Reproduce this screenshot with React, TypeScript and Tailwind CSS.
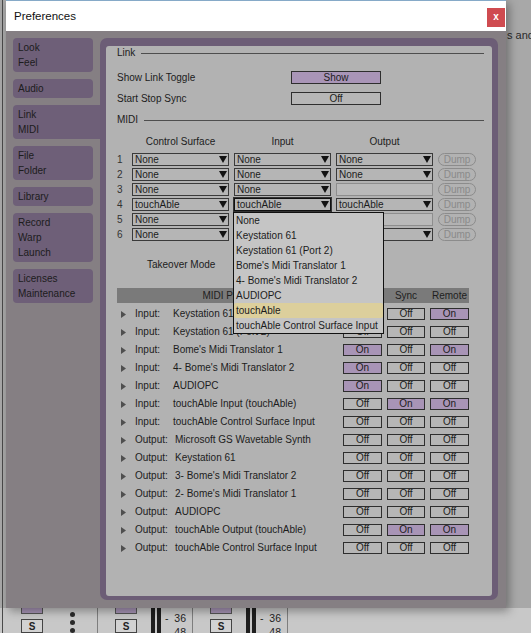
import React from "react";

type Port = {
  dir: "Input" | "Output";
  name: string;
  track: boolean;
  sync: boolean;
  remote: boolean;
};

const ports: Port[] = [
  { dir: "Input", name: "Keystation 61", track: true, sync: false, remote: true },
  { dir: "Input", name: "Keystation 61 (Port 2)", track: false, sync: false, remote: false },
  { dir: "Input", name: "Bome's Midi Translator 1", track: true, sync: false, remote: true },
  { dir: "Input", name: "4- Bome's Midi Translator 2", track: true, sync: false, remote: false },
  { dir: "Input", name: "AUDIOPC", track: true, sync: false, remote: false },
  { dir: "Input", name: "touchAble Input (touchAble)", track: false, sync: true, remote: true },
  { dir: "Input", name: "touchAble Control Surface Input", track: false, sync: false, remote: false },
  { dir: "Output", name: "Microsoft GS Wavetable Synth", track: false, sync: false, remote: false },
  { dir: "Output", name: "Keystation 61", track: false, sync: false, remote: false },
  { dir: "Output", name: "3- Bome's Midi Translator 2", track: false, sync: false, remote: false },
  { dir: "Output", name: "2- Bome's Midi Translator 1", track: false, sync: false, remote: false },
  { dir: "Output", name: "AUDIOPC", track: false, sync: false, remote: false },
  { dir: "Output", name: "touchAble Output (touchAble)", track: false, sync: true, remote: true },
  { dir: "Output", name: "touchAble Control Surface Input", track: false, sync: false, remote: false },
];

const surfaces: { cs: string; input: string; output: string | null }[] = [
  { cs: "None", input: "None", output: "None" },
  { cs: "None", input: "None", output: "None" },
  { cs: "None", input: "None", output: null },
  { cs: "touchAble", input: "touchAble", output: "touchAble" },
  { cs: "None", input: "None", output: null },
  { cs: "None", input: "None", output: "None" },
];

const menuItems = [
  "None",
  "Keystation 61",
  "Keystation 61 (Port 2)",
  "Bome's Midi Translator 1",
  "4- Bome's Midi Translator 2",
  "AUDIOPC",
  "touchAble",
  "touchAble Control Surface Input",
];

const tabs = [
  ["Look", "Feel"],
  ["Audio"],
  ["Link", "MIDI"],
  ["File", "Folder"],
  ["Library"],
  ["Record", "Warp", "Launch"],
  ["Licenses", "Maintenance"],
];

const Arrow = () => (
  <svg width="8" height="7" viewBox="0 0 8 7" className="shrink-0">
    <path d="M0 0H8L4 7Z" fill="#121212" />
  </svg>
);

function Select({
  value,
  focused,
  children,
}: {
  value: string | null;
  focused?: boolean;
  children?: React.ReactNode;
}) {
  if (value === null) {
    return <div className="h-[13px] w-[97px] border border-[#8e8e8e] bg-[#bababa]" />;
  }
  return (
    <div
      className={`relative flex h-[13px] w-[97px] items-center justify-between bg-[#b5b5b5] pl-[2px] pr-[1px] ${
        focused ? "border border-[#111] outline outline-1 outline-[#333]" : "border border-[#3a3a3a]"
      }`}
    >
      <span className="leading-none">{value}</span>
      <Arrow />
      {children}
    </div>
  );
}

function SectionHeader({ label }: { label: string }) {
  return (
    <div className="flex h-[14px] items-center">
      <span className="leading-none">{label}</span>
      <div className="ml-[6px] h-px flex-1 bg-[#4e4e4e]" />
    </div>
  );
}

function Toggle({ on, w }: { on: boolean; w: string }) {
  return (
    <div
      className={`flex h-[12px] ${w} items-center justify-center border border-[#2e2e2e] leading-none ${
        on ? "bg-[#a894b6]" : "bg-[#b6b6b6]"
      }`}
    >
      {on ? "On" : "Off"}
    </div>
  );
}

function MixerButtons({ ml }: { ml: string }) {
  return (
    <div className={`${ml} flex w-[22px] flex-col`}>
      <div className="h-[9px] border-x border-b border-[#555] bg-[#a693b4]" />
      <div className="mt-[5px] flex h-[14px] items-center justify-center border border-[#444] bg-[#d2d2d2] text-[10px] font-bold">
        S
      </div>
    </div>
  );
}

function Mixer() {
  return (
    <div className="flex h-[25px] bg-[#c8c8c8] text-[#222]">
      <div className="flex w-[6px] pl-[2px]">
        <div className="w-px bg-[#4a4a4a]" />
      </div>
      <div className="flex w-[92px] border-r border-[#7e7e7e]">
        <MixerButtons ml="ml-[15px]" />
        <div className="ml-[27px] flex flex-col gap-[3px] pt-[4px]">
          <div className="h-[5px] w-[5px] rounded-full bg-[#2a2a2a]" />
          <div className="h-[5px] w-[5px] rounded-full bg-[#2a2a2a]" />
          <div className="h-[5px] w-[5px] rounded-full bg-[#2a2a2a]" />
        </div>
      </div>
      {[0, 1].map((i) => (
        <div key={i} className="flex w-[95px] border-r border-[#7e7e7e]">
          <MixerButtons ml="ml-[17px]" />
          <div className="ml-[14px] flex gap-[2px]">
            <div className="w-[4px] bg-[#1e1e1e]" />
            <div className="w-[4px] bg-[#1e1e1e]" />
          </div>
          <div className="ml-[4px] flex flex-col pt-[3px] text-[10.5px] leading-[14px]">
            <span>-&nbsp;&nbsp;36</span>
            <span>-&nbsp;&nbsp;48</span>
          </div>
        </div>
      ))}
    </div>
  );
}

function PortTable() {
  return (
    <div className="w-[352px]">
      <div className="flex h-[15px] items-center bg-[#7a7a7a] leading-none text-[#1e1e1e]">
        <span className="w-[226px] pr-[8px] text-center">MIDI Ports</span>
        <span className="w-[39px] text-center">Track</span>
        <span className="ml-[5px] w-[38px] text-center">Sync</span>
        <span className="ml-[5px] w-[39px] text-center">Remote</span>
      </div>
      <div className="pt-[2px]">
        {ports.map((p, i) => (
          <div key={i} className="flex h-[18px] items-center">
            <div className="flex w-[18px] pl-[4px]">
              <svg width="5" height="7" viewBox="0 0 5 7">
                <path d="M0 0L5 3.5L0 7Z" fill="#4f4f4f" />
              </svg>
            </div>
            <span className={`${p.dir === "Input" ? "w-[38px]" : "w-[40px]"} leading-none`}>{p.dir}:</span>
            <span className="flex-1 whitespace-nowrap leading-none">{p.name}</span>
            <div className="flex gap-[5px]">
              <Toggle on={p.track} w="w-[39px]" />
              <Toggle on={p.sync} w="w-[38px]" />
              <Toggle on={p.remote} w="w-[39px]" />
            </div>
          </div>
        ))}
      </div>
    </div>
  );
}

function LinkMidiPanel() {
  return (
    <div className="h-full rounded-[3px] bg-[#b2b2b2] pl-[11px] pr-[8px]">
      <div className="mt-[2px]">
        <SectionHeader label="Link" />
      </div>
      <div className="mt-[11px] flex h-[13px] items-center">
        <span className="w-[174px] leading-none">Show Link Toggle</span>
        <div className="flex h-[13px] w-[90px] items-center justify-center border border-[#2e2e2e] bg-[#a995b7] leading-none">
          Show
        </div>
      </div>
      <div className="mt-[8px] flex h-[13px] items-center">
        <span className="w-[174px] leading-none">Start Stop Sync</span>
        <div className="flex h-[13px] w-[90px] items-center justify-center border border-[#2e2e2e] bg-[#b6b6b6] leading-none">
          Off
        </div>
      </div>
      <div className="mt-[8px]">
        <SectionHeader label="MIDI" />
      </div>
      <div className="mt-[8px] flex h-[14px] items-center gap-[5px] pl-[15px] leading-none">
        <span className="w-[97px] text-center">Control Surface</span>
        <span className="w-[97px] text-center">Input</span>
        <span className="w-[97px] text-center">Output</span>
      </div>
      <div className="mt-[4px] flex flex-col gap-[2px]">
        {surfaces.map((s, i) => (
          <div key={i} className="flex h-[13px] items-center">
            <span className="w-[15px] leading-none text-[#333]">{i + 1}</span>
            <div className="flex gap-[5px]">
              <Select value={s.cs} />
              <Select value={s.input} focused={i === 3}>
                {i === 3 && (
                  <div className="absolute left-[-2px] top-[13px] z-10 w-[151px] border border-[#111] bg-[#c5c5c5]">
                    {menuItems.map((m) => (
                      <div
                        key={m}
                        className={`h-[15px] whitespace-nowrap pl-[2px] leading-[15px] ${
                          m === "touchAble" ? "rounded-[2px] bg-[#dccf9c]" : ""
                        }`}
                      >
                        {m}
                      </div>
                    ))}
                  </div>
                )}
              </Select>
              <Select value={s.output} />
              <div className="flex h-[13px] w-[38px] items-center justify-center rounded-full border border-[#8c8c8c] leading-none text-[#8a8a8a]">
                Dump
              </div>
            </div>
          </div>
        ))}
      </div>
      <div className="mt-[17px] flex h-[14px] items-center">
        <span className="pl-[30px] leading-none">Takeover Mode</span>
      </div>
      <div className="mt-[16px]">
        <PortTable />
      </div>
    </div>
  );
}

function Dialog() {
  return (
    <div className="absolute left-[6px] top-0 flex h-[608px] w-[500px] flex-col bg-[#857f83] shadow-[3px_3px_9px_rgba(0,0,0,0.35)]">
      <div className="flex h-[31px] items-start justify-between border-t border-[#86aac8] bg-white">
        <span className="pl-[8px] pt-[8px] text-[11.5px] leading-[14px] text-[#111]">Preferences</span>
        <div className="mr-[1px] mt-[7px] flex h-[19px] w-[18px] items-center justify-center bg-[#cf4b50] pb-[1px] text-[10px] font-bold leading-none text-white">
          x
        </div>
      </div>
      <div className="flex flex-1 pl-[7px] pt-[7px]">
        <div className="flex w-[87px] flex-col gap-[7px]">
          {tabs.map((t) => {
            const active = t[0] === "Link";
            return (
              <div
                key={t[0]}
                className={`bg-[#6e5f78] px-[5px] py-[2px] leading-[15px] text-[#1c1c1c] ${
                  active ? "w-[87px] rounded-l-[4px]" : "w-[80px] rounded-[4px]"
                }`}
              >
                {t.map((l) => (
                  <div key={l}>{l}</div>
                ))}
              </div>
            );
          })}
        </div>
        <div className="h-[562px] w-[398px] rounded-[7px] bg-[#6c5d76] p-[6px]">
          <LinkMidiPanel />
        </div>
      </div>
    </div>
  );
}

export default function App() {
  return (
    <div className="relative h-[633px] w-[531px] overflow-hidden bg-[#a8a8a8] font-['Liberation_Sans',Arial,sans-serif] text-[10px] text-[#1c1c1c]">
      <div className="flex h-full flex-col">
        <div className="flex flex-1">
          <div className="flex w-[6px] pl-[2px]">
            <div className="w-px bg-[#4a4a4a]" />
          </div>
          <div className="w-[500px]" />
          <div className="flex-1 overflow-hidden whitespace-nowrap pl-[1px] pt-[27px] text-[11px] text-[#2a2a2a]">
            s and
          </div>
        </div>
        <Mixer />
      </div>
      <Dialog />
    </div>
  );
}
